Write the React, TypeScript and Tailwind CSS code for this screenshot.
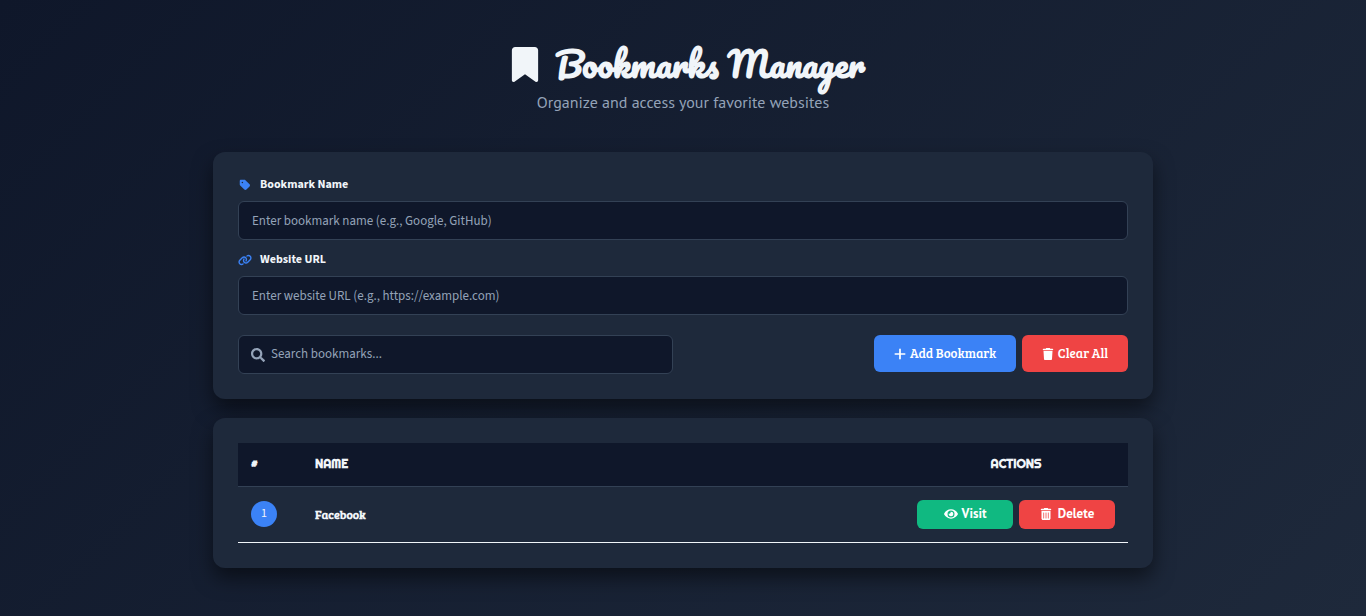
import { useState } from "react";
import { FaEye, FaSearch } from "react-icons/fa";
import {
  FaBookmark,
  FaLink,
  FaPlus,
  FaTag,
  FaTrash,
  FaTrashCan,
} from "react-icons/fa6";

const bookmarks = [{ name: "Facebook", url: "https://facebook.com" }];

export default function App() {
  const [query, setQuery] = useState("");
  const visible = bookmarks.filter((b) =>
    b.name.toLowerCase().includes(query.toLowerCase())
  );

  return (
    <main className="min-h-screen bg-linear-135 from-[#0f172a] to-[#1e293b] px-4 pt-10 pb-12 font-['Source_Sans_3','Open_Sans',sans-serif] text-slate-100">
      <div className="mx-auto max-w-[940px]">
        {/* Header */}
        <header className="mb-10 text-center">
          <h1 className="flex h-12 items-center justify-center gap-3 pl-1.5 font-[Pacifico,cursive] text-[34px] leading-[46px] font-bold text-slate-100">
            <FaBookmark className="h-[35px] w-9" />
            Bookmarks Manager
          </h1>
          <p className="mt-1 font-['PT_Sans','Noto_Sans',sans-serif] text-base leading-5 text-[#94a3b8]">
            Organize and access your favorite websites
          </p>
        </header>

        {/* Bookmark form */}
        <section className="mb-[19px] rounded-xl bg-[#1e293b] p-[25px] shadow-[0_10px_20px_rgba(0,0,0,0.5)]">
          <form onSubmit={(e) => e.preventDefault()}>
            <div className="mb-3">
              <label
                htmlFor="name"
                className="mb-2 flex items-center gap-2 text-xs leading-4 font-bold"
              >
                <FaTag className="h-3 w-3.5 text-[#3b82f6]" />
                Bookmark Name
              </label>
              <input
                id="name"
                type="text"
                placeholder="Enter bookmark name (e.g., Google, GitHub)"
                className="block h-[39px] w-full rounded-md border border-[#334155] bg-[#0f172a] px-[13px] text-[13px] placeholder:text-[#94a3b8]"
              />
            </div>
            <div className="mb-5">
              <label
                htmlFor="url"
                className="mb-2 flex items-center gap-2 text-xs leading-4 font-bold"
              >
                <FaLink className="h-3 w-3.5 text-[#3b82f6]" />
                Website URL
              </label>
              <input
                id="url"
                type="text"
                placeholder="Enter website URL (e.g., https://example.com)"
                className="block h-[39px] w-full rounded-md border border-[#334155] bg-[#0f172a] px-[13px] text-[13px] placeholder:text-[#94a3b8]"
              />
            </div>
            <div className="flex flex-wrap items-start justify-between gap-3">
              <label className="flex h-[39px] w-full max-w-[435px] items-center gap-1.5 rounded-md border border-[#334155] bg-[#0f172a] px-3">
                <FaSearch className="h-3.5 w-3.5 shrink-0 text-[#94a3b8]" />
                <input
                  type="search"
                  aria-label="Search bookmarks"
                  placeholder="Search bookmarks..."
                  value={query}
                  onChange={(e) => setQuery(e.target.value)}
                  className="w-full bg-transparent text-[13px] outline-none placeholder:text-[#94a3b8]"
                />
              </label>
              <div className="flex gap-1.5 font-['Bree_Serif',serif] text-[13px]">
                <button
                  type="submit"
                  className="flex h-[37px] w-[142px] items-center justify-center gap-1 rounded-md bg-[#3b82f6] text-white"
                >
                  <FaPlus className="h-3.5 w-3" />
                  Add Bookmark
                </button>
                <button
                  type="button"
                  className="flex h-[37px] w-[106px] items-center justify-center gap-1 rounded-md bg-[#ef4444] text-white"
                >
                  <FaTrash className="h-3 w-3" />
                  Clear All
                </button>
              </div>
            </div>
          </form>
        </section>

        {/* Saved bookmarks */}
        <section className="rounded-xl bg-[#1e293b] p-[25px] shadow-[0_10px_20px_rgba(0,0,0,0.5)]">
          <table className="w-full border-collapse text-xs">
            <thead>
              <tr className="h-[43px] border-b border-[#334155] bg-[#0f172a] text-left font-[Righteous,sans-serif]">
                <th className="w-16 px-[13px] font-bold">#</th>
                <th className="px-[13px] font-bold">NAME</th>
                <th className="w-[224px] px-[13px] text-center font-bold">
                  ACTIONS
                </th>
              </tr>
            </thead>
            <tbody>
              {visible.map((bookmark, i) => (
                <tr key={bookmark.name} className="h-14 border-b border-slate-100">
                  <td className="px-[13px]">
                    <span className="flex h-[26px] w-[26px] items-center justify-center rounded-full bg-[#3b82f6]">
                      {i + 1}
                    </span>
                  </td>
                  <td className="px-[13px] font-['Bree_Serif',serif] font-bold">
                    {bookmark.name}
                  </td>
                  <td className="px-[13px] font-['PT_Sans','Noto_Sans',sans-serif] text-[13px]">
                    <div className="flex gap-1.5">
                      <a
                        href={bookmark.url}
                        className="flex h-[29px] w-24 items-center justify-center gap-1 rounded-md bg-[#10b981] font-bold text-white"
                      >
                        <FaEye className="h-3.5 w-3.5" />
                        Visit
                      </a>
                      <button
                        type="button"
                        className="flex h-[29px] w-24 items-center justify-center gap-1.5 rounded-md bg-[#ef4444] font-bold text-white"
                      >
                        <FaTrashCan className="h-3 w-3" />
                        Delete
                      </button>
                    </div>
                  </td>
                </tr>
              ))}
            </tbody>
          </table>
        </section>
      </div>
    </main>
  );
}
